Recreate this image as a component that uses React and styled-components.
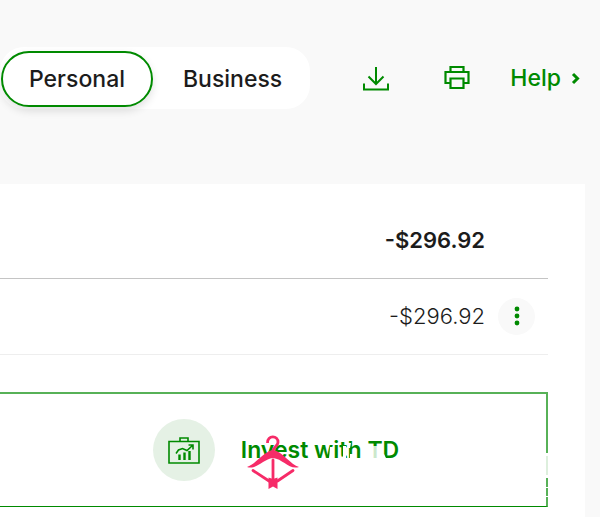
import styled, { createGlobalStyle } from 'styled-components'

const green = '#008a00'
const lightGreen = '#57b157'
const textColor = '#1c1c1c'
const pageColor = '#f9f9f9'

const GlobalStyle = createGlobalStyle`
    * {
        box-sizing: border-box;
    }
    body {
        margin: 0;
        background: ${pageColor};
        color: ${textColor};
        font-family: Inter, "Liberation Sans", sans-serif;
        font-size: 23px;
        line-height: 28px;
        overflow-x: hidden;
    }
    button {
        border: 0;
        padding: 0;
        background: none;
        color: inherit;
        font: inherit;
        cursor: pointer;
    }
`

const Header = styled.header`
    display: flex;
    align-items: center;
    justify-content: space-between;
    padding: 47px 19px 75px 0;
`

const Tabs = styled.div`
    display: flex;
    align-items: center;
    gap: 2px;
    height: 62px;
    padding: 1px 0 0 1px;
    border-radius: 24px;
    background: white;
`

const Tab = styled.button`
    && {
        height: 56px;
        padding: 0 26px;
        font-weight: 500;
        border: 2px solid ${props => props.$active ? green : 'transparent'};
        border-radius: 28px;
        box-shadow: ${props => props.$active ? '0 4px 8px rgb(0 0 0 / 12%)' : 'none'};
    }
`

const Tools = styled.div`
    display: flex;
    align-items: center;
    color: ${green};
`

const IconButton = styled.button`
    && {
        display: flex;
        margin-right: ${props => props.$gap}px;
    }
`

const HelpLink = styled.a`
    display: flex;
    align-items: center;
    gap: 10px;
    color: ${green};
    font-weight: 500;
    text-decoration: none;
`

const Card = styled.main`
    min-height: 333px;
    margin-right: 15px;
    padding: 18px 37px 10px 0;
    background: white;
`

const Accounts = styled.table`
    width: 100%;
    border-collapse: collapse;
    font-size: 22px;
    td {
        height: 76px;
        padding: 0;
        text-align: right;
    }
`

const Row = styled.tr`
    border-bottom: 1px solid ${props => props.$total ? '#c4c4c4' : '#eeeeee'};
    font-weight: ${props => props.$total ? 600 : 300};
    td:last-child {
        width: 63px;
        padding-right: 13px;
    }
`

const MoreButton = styled.button`
    && {
        display: flex;
        align-items: center;
        justify-content: center;
        width: 37px;
        height: 37px;
        margin-left: auto;
        border-radius: 50%;
        background: ${pageColor};
    }
`

const Invest = styled.section`
    position: relative;
    display: flex;
    align-items: center;
    justify-content: center;
    gap: 26px;
    height: 115px;
    margin-top: 37px;
    padding-left: 6px;
    border-top: 2px solid ${lightGreen};
    border-right: 2px solid ${lightGreen};
    border-bottom: 1px solid ${green};
    a {
        color: ${green};
        font-weight: 600;
        text-decoration: none;
    }
`

const IconCircle = styled.span`
    display: flex;
    align-items: center;
    justify-content: center;
    width: 62px;
    height: 62px;
    border-radius: 50%;
    background: #e5f1e5;
`

const Watermark = styled.svg`
    position: absolute;
    top: 40px;
    right: -4px;
    pointer-events: none;
`

function DownloadIcon() {
    return (
        <svg width="26" height="26" viewBox="0 0 26 26" fill="none" stroke={green} strokeWidth="2">
            <path d="M13 2v17M5.5 11.5l7.5 7.5 7.5-7.5M1 18.5v6h24v-6" />
        </svg>
    )
}

function PrintIcon() {
    return (
        <svg width="26" height="26" viewBox="0 0 26 26" fill="none" stroke={green} strokeWidth="2.2">
            <path d="M6.5 7V2h13v5M6 18H1.500V7h23v11H20M6.500 13.500h13V23h-13z" />
        </svg>
    )
}

function ChevronIcon() {
    return (
        <svg width="10" height="14" viewBox="0 0 10 14" fill="none" stroke={green} strokeWidth="3">
            <path d="M2 3l4.500 4.500L2 12" />
        </svg>
    )
}

function DotsIcon() {
    return (
        <svg width="6" height="20" viewBox="0 0 6 20" fill={green}>
            <circle cx="3" cy="3" r="2.4" />
            <circle cx="3" cy="10" r="2.4" />
            <circle cx="3" cy="17" r="2.4" />
        </svg>
    )
}

function PortfolioIcon() {
    return (
        <svg width="32" height="28" viewBox="0 0 32 28" fill="none" stroke={green} strokeWidth="1.6">
            <path d="M1 5.500h30v21.500H1zM12 5.500V2h8v3.500" />
            <path d="M8 17.500l2.500-3.500 4-1.500 4.500 2 6-5.500M20.500 9h4.500v4.500" />
            <path d="M11.500 18.500v5.500M16.500 16.500v7.500M21.500 15v9" strokeWidth="2.400" />
        </svg>
    )
}

function HangerMark() {
    return (
        <Watermark width="304" height="76" viewBox="0 0 304 76" aria-hidden="true">
            <g fill="white">
                <path d="M84 13h3v13h-4zM97 12h3v14h-6l3-4zM102 9h3l-1 5h-2z" />
                <path d="M104 20h3v6h-3zM134 21l4-1 3 6h-7z" />
                <path d="M298 19h6v3h-6zM298 41h6v3h-6zM298 53h6v1h-6zM298 62h6v1h-6z" />
                <path d="M122 12h11v14h-11z" opacity="0.8" />
                <path d="M298 22h6v19h-6z" opacity="0.8" />
            </g>
            <path d="M21.500 9C21 1 32.500 1 32 8.500 31.500 13 27 12.500 27 18" fill="none" stroke="#f62b68" strokeWidth="2.800" />
            <path d="M1 33c8-2 17-16 26-17 9 1 18 15 26 17-10 3-16-8-26-9-10 1-16 12-26 9z" fill="#f62b68" />
            <path d="M27 26v20M7 36.500l16 10.500M47 36.500L31.500 47" fill="none" stroke="#f62b68" strokeWidth="2.800" strokeLinecap="round" />
            <path d="M22.500 43.500l4.500 1.500 4.500-1.500V55l-4.500-2.500-4.500 2.500z" fill="#f62b68" />
        </Watermark>
    )
}

function App() {
    return (
        <>
            <GlobalStyle />
            <Header>
                <Tabs role="tablist">
                    <Tab role="tab" aria-selected="true" $active>Personal</Tab>
                    <Tab role="tab" aria-selected="false">Business</Tab>
                </Tabs>
                <Tools>
                    <IconButton aria-label="Download" $gap={55}><DownloadIcon /></IconButton>
                    <IconButton aria-label="Print" $gap={40}><PrintIcon /></IconButton>
                    <HelpLink href="#help">Help<ChevronIcon /></HelpLink>
                </Tools>
            </Header>
            <Card>
                <Accounts>
                    <tbody>
                        <Row $total>
                            <td>-$296.92</td>
                            <td></td>
                        </Row>
                        <Row>
                            <td>-$296.92</td>
                            <td><MoreButton aria-label="More options"><DotsIcon /></MoreButton></td>
                        </Row>
                    </tbody>
                </Accounts>
                <Invest>
                    <IconCircle><PortfolioIcon /></IconCircle>
                    <a href="#invest">Invest with TD</a>
                    <HangerMark />
                </Invest>
            </Card>
        </>
    )
}

export default App
